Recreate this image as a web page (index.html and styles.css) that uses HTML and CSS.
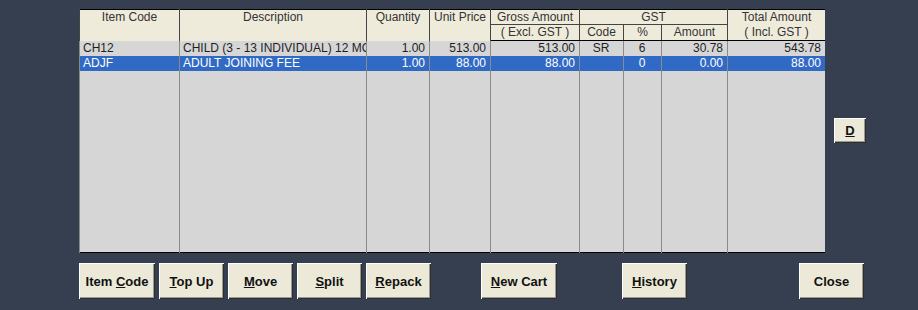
FILE: index.html
```
<!DOCTYPE html>
<html lang="en">

<head>
    <meta charset="utf-8" />
    <title>Cart Items</title>
    <link rel="stylesheet" href="styles.css">
</head>

<body>
    <div class="screen">
        <div class="top-row">
            <!-- item grid -->
            <div class="grid-box">
                <table class="item-grid">
                    <colgroup>
                        <col style="width:100px">
                        <col style="width:187px">
                        <col style="width:63px">
                        <col style="width:61px">
                        <col style="width:89px">
                        <col style="width:44px">
                        <col style="width:38px">
                        <col style="width:66px">
                        <col style="width:98px">
                    </colgroup>
                    <thead>
                        <tr class="head1">
                            <th rowspan="2">Item Code</th>
                            <th rowspan="2">Description</th>
                            <th rowspan="2">Quantity</th>
                            <th rowspan="2">Unit Price</th>
                            <th>Gross Amount</th>
                            <th colspan="3">GST</th>
                            <th>Total Amount</th>
                        </tr>
                        <tr class="head2">
                            <th>( Excl. GST )</th>
                            <th>Code</th>
                            <th>%</th>
                            <th>Amount</th>
                            <th>( Incl. GST )</th>
                        </tr>
                    </thead>
                    <tbody>
                        <tr class="item">
                            <td>CH12</td>
                            <td class="desc">CHILD (3 - 13 INDIVIDUAL) 12 MONTHS</td>
                            <td class="num">1.00</td>
                            <td class="num">513.00</td>
                            <td class="num">513.00</td>
                            <td class="mid">SR</td>
                            <td class="mid">6</td>
                            <td class="num">30.78</td>
                            <td class="num">543.78</td>
                        </tr>
                        <tr class="item selected">
                            <td>ADJF</td>
                            <td class="desc">ADULT JOINING FEE</td>
                            <td class="num">1.00</td>
                            <td class="num">88.00</td>
                            <td class="num">88.00</td>
                            <td class="mid"></td>
                            <td class="mid">0</td>
                            <td class="num">0.00</td>
                            <td class="num">88.00</td>
                        </tr>
                        <tr class="filler">
                            <td></td><td></td><td></td><td></td><td></td><td></td><td></td><td></td><td></td>
                        </tr>
                    </tbody>
                </table>
            </div>
            <div class="side">
                <button class="btn btn-d"><u>D</u></button>
            </div>
        </div>

        <!-- action buttons -->
        <div class="actions">
            <button class="btn w76">Item <u>C</u>ode</button>
            <button class="btn"><u>T</u>op Up</button>
            <button class="btn"><u>M</u>ove</button>
            <button class="btn"><u>S</u>plit</button>
            <button class="btn"><u>R</u>epack</button>
            <button class="btn w76 gap-cart"><u>N</u>ew Cart</button>
            <button class="btn gap-history"><u>H</u>istory</button>
            <button class="btn gap-close">Close</button>
        </div>
    </div>
</body>
</html>
```

FILE: styles.css
```
body {
    margin: 0;
    background-color: #363f4f;
    font-family: "Liberation Sans", Arial, sans-serif;
}

.screen {
    padding: 9px 0 0 79px;
}

.top-row {
    display: flex;
}

.grid-box {
    width: 746px;
    height: 244px;
    background-color: #d6d6d6;
    overflow: hidden;
}

.item-grid {
    width: 746px;
    height: 244px;
    table-layout: fixed;
    border-collapse: collapse;
    border: 1px solid #000;
    font-size: 12px;
}

.item-grid th {
    background-color: #efebdb;
    color: #333;
    font-weight: normal;
    vertical-align: top;
    padding: 0;
    line-height: 14px;
    border-left: 1px solid #444;
    border-right: 1px solid #444;
    white-space: nowrap;
}

.head1 th {
    height: 14px;
}

.head2 th {
    height: 15px;
    border-top: 1px solid #444;
}

.head2 th:last-child {
    border-top: none;
}

.item-grid thead tr:last-child th {
    border-bottom: 1px solid #000;
}

.item-grid td {
    padding: 0 4px 0 3px;
    height: 15px;
    line-height: 15px;
    color: #1e1e1e;
    border-left: 1px solid #8a8a8a;
    border-right: 1px solid #8a8a8a;
    white-space: nowrap;
    overflow: hidden;
}

.item-grid td.desc {
    text-overflow: clip;
}

.item-grid td.num {
    text-align: right;
}

.item-grid td.mid {
    text-align: center;
}

.item.selected td {
    background-color: #316ac5;
    color: #fff;
}

.filler td {
    height: auto;
}

.side {
    padding: 109px 0 0 9px;
}

.btn {
    width: 65px;
    height: 36px;
    padding: 0;
    background-color: #ece9d8;
    border: none;
    box-shadow: inset 1px 1px #fff, inset -1px -1px #2e2e2e, inset -2px -2px #9c9a90;
    font-family: "Liberation Sans", Arial, sans-serif;
    font-size: 13px;
    font-weight: bold;
    color: #111;
}

.btn-d {
    width: 32px;
    height: 25px;
}

.actions {
    display: flex;
    gap: 4px;
    margin-top: 10px;
}

.w76 {
    width: 76px;
}

.gap-cart {
    margin-left: 46px;
}

.gap-history {
    margin-left: 61px;
}

.gap-close {
    margin-left: 108px;
}
```
